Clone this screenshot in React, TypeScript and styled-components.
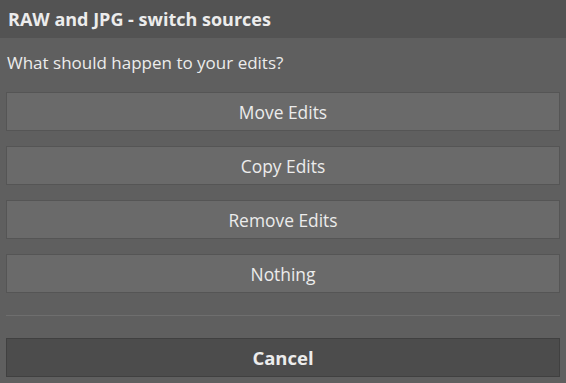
import styled, { createGlobalStyle } from "styled-components";

const GlobalStyle = createGlobalStyle`
  html, body {
    margin: 0;
    padding: 0;
    background: #5f5f5f;
  }
  body {
    font-family: "Open Sans", "Noto Sans", sans-serif;
  }
`;

const Dialog = styled.div`
  width: 566px;
  height: 383px;
  background: #5f5f5f;
  display: flex;
  flex-direction: column;
  box-sizing: border-box;
`;

const Header = styled.div`
  height: 38px;
  background: #535353;
  display: flex;
  align-items: center;
  padding: 0 8px 1px;
  box-sizing: border-box;
  color: #ececec;
  font-size: 18px;
  font-weight: 700;
`;

const Body = styled.div`
  display: flex;
  flex-direction: column;
  padding: 0 6px;
`;

const Question = styled.p`
  margin: 12px 0 0 1px;
  height: 25px;
  line-height: 25px;
  color: #ececec;
  font-size: 17px;
`;

const Options = styled.div`
  display: flex;
  flex-direction: column;
  gap: 15px;
  margin-top: 17px;
`;

const Button = styled.button<{ $variant?: "cancel" }>`
  height: 39px;
  width: 100%;
  box-sizing: border-box;
  border: 1px solid ${(p) => (p.$variant === "cancel" ? "#404040" : "#555555")};
  background: ${(p) => (p.$variant === "cancel" ? "#4c4c4c" : "#6a6a6a")};
  color: #ececec;
  font-family: "Open Sans", "Noto Sans", sans-serif;
  font-size: ${(p) => (p.$variant === "cancel" ? "18.5px" : "17.4px")};
  font-weight: ${(p) => (p.$variant === "cancel" ? 700 : 400)};
  padding: 0;
  cursor: pointer;
`;

const Divider = styled.hr`
  margin: 22px 0 22px;
  border: none;
  border-top: 1px solid #6e6e6e;
  height: 0;
`;

const OPTIONS = ["Move Edits", "Copy Edits", "Remove Edits", "Nothing"];

const App = () => {
  return (
    <>
      <GlobalStyle />
      <Dialog>
        <Header>RAW and JPG - switch sources</Header>
        <Body>
          <Question>What should happen to your edits?</Question>
          <Options>
            {OPTIONS.map((label) => (
              <Button key={label}>{label}</Button>
            ))}
          </Options>
          <Divider />
          <Button $variant="cancel">Cancel</Button>
        </Body>
      </Dialog>
    </>
  );
};

export default App;
